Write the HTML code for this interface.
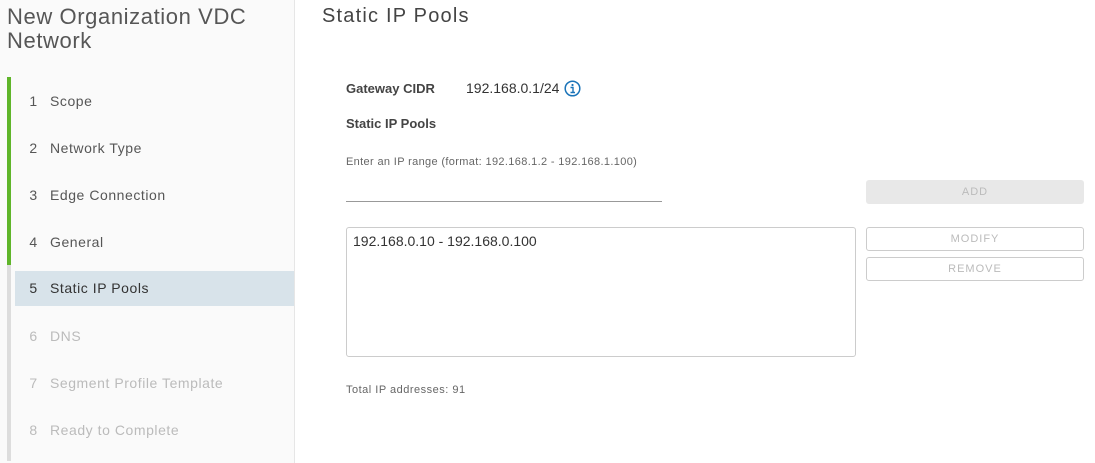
<!DOCTYPE html>
<html><head><style>
*{margin:0;padding:0;box-sizing:border-box}
body{width:1095px;height:463px;overflow:hidden;background:#fff;font-family:"Liberation Sans",sans-serif;position:relative;color:#333}
.side{position:absolute;left:0;top:0;width:295px;height:463px;background:#fafafa;border-right:1px solid #e6e6e6}
.t{position:absolute;left:7px;top:5px;font-size:22px;line-height:24px;color:#565656;letter-spacing:0.6px}
.bar{position:absolute;left:7px;width:4px}
.it{position:absolute;left:15px;width:279px;height:35px;line-height:35px;font-size:14px;color:#565656;letter-spacing:0.55px}
.it span{display:inline-block;width:35px;text-align:center;padding-left:2px}
.it.dis{color:#bbb}
.it.act{background:#d8e3ea;color:#333}
.a{position:absolute;font-size:13px}
.btn{position:absolute;left:866px;width:218px;height:24px;border:1px solid #ccc;border-radius:3px;font-size:11px;letter-spacing:1px;color:#bbb;text-align:center;line-height:22px}
</style></head><body>
<div class="side">
<div class="t">New Organization VDC<br>Network</div>
<div class="bar" style="top:77px;height:188px;background:#5fb52a"></div>
<div class="bar" style="top:265px;height:196px;background:#ddd"></div>
<div class="it" style="top:84px"><span>1</span>Scope</div>
<div class="it" style="top:131px"><span>2</span>Network Type</div>
<div class="it" style="top:178px"><span>3</span>Edge Connection</div>
<div class="it" style="top:225px"><span>4</span>General</div>
<div class="it act" style="top:271px"><span>5</span>Static IP Pools</div>
<div class="it dis" style="top:319px"><span>6</span>DNS</div>
<div class="it dis" style="top:366px"><span>7</span>Segment Profile Template</div>
<div class="it dis" style="top:413px"><span>8</span>Ready to Complete</div>
</div>
<div class="a" style="left:322px;top:5px;font-size:20px;color:#444;letter-spacing:1.2px">Static IP Pools</div>
<div class="a" style="left:346px;top:81px;font-weight:bold;color:#444">Gateway CIDR</div>
<div class="a" style="left:466px;top:80px;font-size:14px;color:#333">192.168.0.1/24</div>
<svg style="position:absolute;left:564px;top:80px" width="17" height="17" viewBox="0 0 17 17"><circle cx="8.5" cy="8.5" r="7.3" fill="none" stroke="#1a73b8" stroke-width="1.5"/><circle cx="8.5" cy="5" r="1.1" fill="#1a73b8"/><path d="M6.5 7.5h2.5v5M6.5 12.5h4.5" fill="none" stroke="#1a73b8" stroke-width="1.4"/></svg>
<div class="a" style="left:346px;top:116px;font-weight:bold;color:#444">Static IP Pools</div>
<div class="a" style="left:346px;top:156px;font-size:11px;color:#666;letter-spacing:0.35px">Enter an IP range (format: 192.168.1.2 - 192.168.1.100)</div>
<div style="position:absolute;left:346px;top:201px;width:316px;height:1px;background:#999"></div>
<div style="position:absolute;left:866px;top:180px;width:218px;height:24px;background:#e8e8e8;border-radius:3px;font-size:11px;letter-spacing:1px;color:#bbb;text-align:center;line-height:24px">ADD</div>
<div style="position:absolute;left:346px;top:227px;width:510px;height:130px;border:1px solid #ccc;border-radius:3px;font-size:14px;padding:5px 6px;color:#333">192.168.0.10 - 192.168.0.100</div>
<div class="btn" style="top:227px">MODIFY</div>
<div class="btn" style="top:257px">REMOVE</div>
<div class="a" style="left:346px;top:384px;font-size:11px;color:#666;letter-spacing:0.5px">Total IP addresses: 91</div>
</body></html>
